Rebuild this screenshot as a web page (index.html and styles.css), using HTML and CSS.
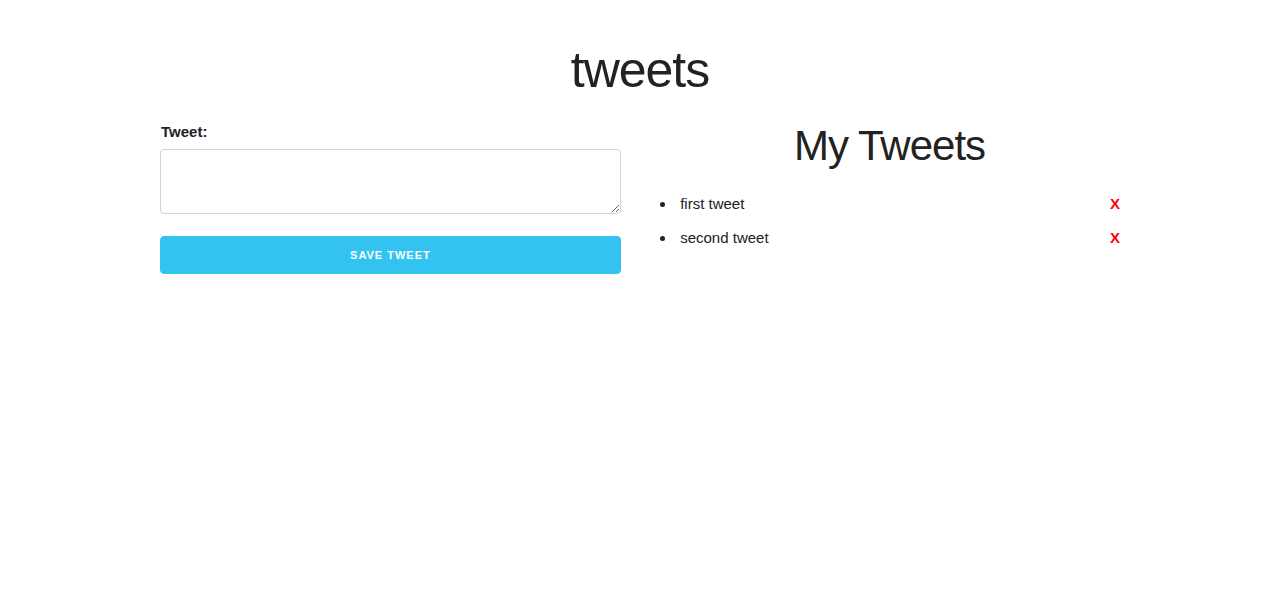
FILE: index.html
```html
<!DOCTYPE html>
<html lang="en">
<head>
<meta charset="utf-8">
<title>tweets</title>
<link rel="stylesheet" href="styles.css">
</head>
<body>
<div class="container">
  <h1 class="title">tweets</h1>
  <div class="row">
    <div class="col col-left">
      <form class="tweet-form">
        <label class="label" for="tweet">Tweet:</label>
        <textarea id="tweet" class="textarea"></textarea>
        <button type="button" class="button-primary">Save tweet</button>
      </form>
    </div>
    <div class="col col-right">
      <h2 class="subtitle">My Tweets</h2>
      <ul class="tweet-list">
        <li class="tweet"><div class="tweet-row"><span class="tweet-text">first tweet</span><span class="delete">X</span></div></li>
        <li class="tweet"><div class="tweet-row"><span class="tweet-text">second tweet</span><span class="delete">X</span></div></li>
      </ul>
    </div>
  </div>
</div>
</body>
</html>
```

FILE: styles.css
```css
* { box-sizing: border-box; }
html, body { margin: 0; padding: 0; background: #fff; }
body {
  font-family: "Liberation Sans", Arial, Helvetica, sans-serif;
  font-size: 15px;
  line-height: 1.6;
  color: #222;
}
.container {
  width: 960px;
  margin: 0 auto;
  padding-top: 40px;
}
.title {
  margin: 0 0 20px;
  font-size: 50px;
  line-height: 1.2;
  font-weight: normal;
  letter-spacing: -1px;
  text-align: center;
}
.row {
  display: flex;
  gap: 38.4px;
}
.col { width: 460.8px; }
.label {
  display: block;
  font-weight: bold;
  margin-bottom: 5px;
  padding-left: 1px;
}
.textarea {
  display: block;
  width: 100%;
  height: 65px;
  padding: 6px 10px;
  border: 1px solid #d1d1d1;
  border-radius: 4px;
  background: #fff;
  font-family: inherit;
  font-size: 15px;
  margin: 0 0 22px;
}
.button-primary {
  display: block;
  width: 100%;
  height: 38px;
  padding: 1px 30px 0;
  border: 1px solid #33c3f0;
  border-radius: 4px;
  background: #33c3f0;
  color: #fff;
  font-family: inherit;
  font-size: 11px;
  font-weight: bold;
  letter-spacing: 1px;
  text-transform: uppercase;
  line-height: 35px;
  cursor: pointer;
}
.subtitle {
  margin: 0 0 19px;
  font-size: 42px;
  line-height: 1.25;
  font-weight: normal;
  letter-spacing: -1px;
  text-align: center;
}
.tweet-list {
  margin: 0;
  padding-left: 17px;
  list-style: disc outside;
}
.tweet {
  margin-bottom: 10px;
  padding-left: 4px;
}
.tweet-row {
  display: flex;
  justify-content: space-between;
}
.delete {
  color: #f00;
  font-weight: bold;
}
```
